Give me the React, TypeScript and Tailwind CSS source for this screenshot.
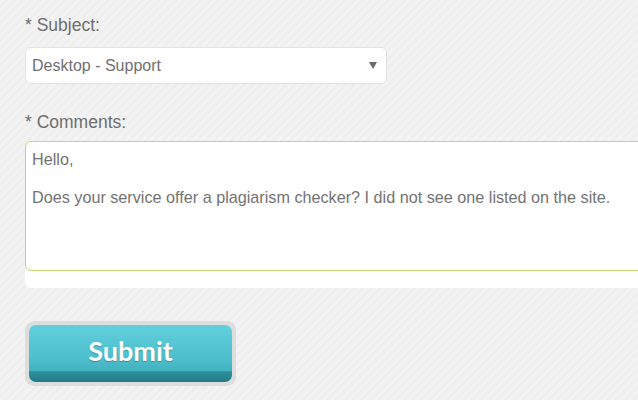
export default function App() {
  return (
    <div className="h-[400px] w-full overflow-hidden bg-[repeating-linear-gradient(135deg,#f3f3f3_0px,#f3f3f3_3px,#efefef_3px,#efefef_6px)] pl-[25px] pt-[15px] font-['Liberation_Sans',Arial,sans-serif] text-[#6e6e6e]">
      {/* Subject */}
      <label className="block text-[17.5px] leading-[20px]">* Subject:</label>
      <div className="mt-[12px] flex h-[37px] w-[362px] items-center justify-between rounded-md border border-[#e2e2e2] bg-white pl-[6px] pr-[9px] text-[16px] text-[#707070]">
        <span>Desktop - Support</span>
        <svg width="8" height="7" viewBox="0 0 8 7">
          <polygon points="0,0 8,0 4,7" fill="#6a6a6a" />
        </svg>
      </div>

      {/* Comments */}
      <label className="mt-[28px] block text-[17.5px] leading-[20px]">* Comments:</label>
      <div className="mt-[9px] w-[640px] rounded-bl-md rounded-tl-md bg-white pb-[17px]">
        <div className="h-[130px] rounded-md border border-[#bfd76f] px-[6px] pt-[8px] text-[16.2px] leading-[19px] text-[#737373] whitespace-pre-wrap">
          {"Hello,\n\nDoes your service offer a plagiarism checker? I did not see one listed on the site."}
        </div>
      </div>

      {/* Submit */}
      <div className="mt-[33px] w-[211px] rounded-[9px] bg-[#dddddd] p-[4px]">
        <button className="flex h-[57px] w-full items-center justify-center rounded-[7px] bg-[linear-gradient(to_bottom,#62cfdc_0%,#4fc0ce_55%,#43b2c0_80%,#2d909c_82%,#227b86_100%)] pb-[4px] font-['Lato',sans-serif] text-[27px] font-bold text-white [text-shadow:0_1px_1px_rgba(0,0,0,0.25)]">
          Submit
        </button>
      </div>
    </div>
  );
}
